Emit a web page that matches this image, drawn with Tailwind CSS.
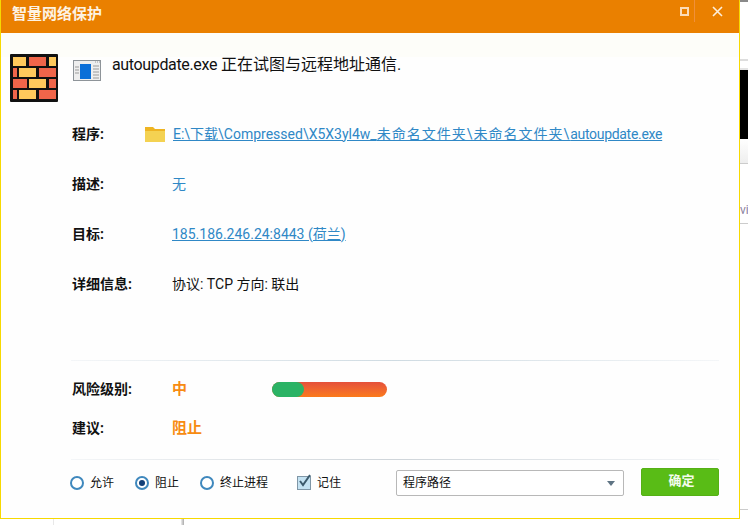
<!DOCTYPE html>
<html lang="zh">
<head>
    <meta charset="UTF-8">
    <title>智量网络保护</title>
    <script src="https://cdn.jsdelivr.net/npm/@tailwindcss/browser@4"></script>
</head>
<body class="relative w-[748px] h-[525px] overflow-hidden bg-white font-['Roboto','Noto_Sans_CJK_SC',sans-serif] text-[14px] text-[#111]">
    <!-- 背景里露出来的窗口 -->
    <div class="absolute left-[740px] top-0 w-2 h-[525px] bg-white">
        <div class="h-[2px] bg-[#8a8a8a]"></div>
        <div class="mt-[57px] h-[2px] bg-[#dddddd]"></div>
        <div class="mt-[7px] h-[2px] bg-[#e4e4e4]"></div>
        <div class="h-[69px] bg-black"></div>
        <div class="h-[25px] bg-gradient-to-b from-[#ffffff] to-[#eeeeee] border-b border-[#cccccc]"></div>
        <div class="mt-[38px] text-[12px] leading-4 text-[#8a7fa0]">vi</div>
        <div class="mt-[5px] h-px bg-[#cccccc]"></div>
        <div class="mt-[285px] h-px bg-[#cccccc]"></div>
    </div>
    <div class="absolute left-[53px] top-[519px] w-px h-[6px] bg-[#e8e8e8]"></div>
    <div class="absolute left-[181px] top-[519px] w-[3px] h-[6px] bg-gradient-to-r from-[#eeeeee] to-[#aaaaaa]"></div>

    <!-- 弹窗 -->
    <div class="absolute left-0 top-0 w-[740px] h-[519px] flex flex-col bg-[#fefefe] border-x border-b border-[#f7d900]">
        <header class="flex justify-between h-[33px] bg-[#ea8000] pl-[11px]">
            <h1 class="text-[15px] font-bold text-[#fdf3e4] leading-[28px]">智量网络保护</h1>
            <div class="flex h-[22px]">
                <button class="flex items-center justify-center w-[21px] border-r border-[#f0903a]">
                    <span class="block w-[9px] h-[9px] border-2 border-[#fbdcb8]"></span>
                </button>
                <button class="flex items-center justify-center w-[44px]">
                    <svg width="11" height="11" viewBox="0 0 11 11" fill="none" stroke="#fdeeda" stroke-width="1.6"><path d="M1 1l9 9M10 1l-9 9"/></svg>
                </button>
            </div>
        </header>

        <!-- 顶部说明 -->
        <div class="h-[24px] bg-[#fdfdf9]"></div>
        <div class="flex items-start pl-[9px] h-[67px] -mt-[24px]">
            <svg class="mt-[21px]" width="48" height="48" viewBox="0 0 48 48">
                <rect width="48" height="48" rx="1" fill="#111"/>
                <rect x="3" y="3" width="13" height="9" fill="#ffc95c"/>
                <rect x="19" y="3" width="17" height="9" fill="#f0654a"/>
                <rect x="39" y="3" width="7" height="9" fill="#ffc95c"/>
                <rect x="3" y="14" width="4" height="9" fill="#f0654a"/>
                <rect x="9" y="14" width="17" height="9" fill="#ffc95c"/>
                <rect x="29" y="14" width="17" height="9" fill="#f0654a"/>
                <rect x="3" y="25" width="14" height="9" fill="#f0654a"/>
                <rect x="19" y="25" width="17" height="9" fill="#ffc95c"/>
                <rect x="39" y="25" width="7" height="9" fill="#f0654a"/>
                <rect x="3" y="36" width="4" height="9" fill="#f0654a"/>
                <rect x="9" y="36" width="17" height="9" fill="#ffc95c"/>
                <rect x="29" y="36" width="17" height="9" fill="#f0654a"/>
            </svg>
            <svg class="mt-[27px] ml-[15px]" width="28" height="21" viewBox="0 0 28 21">
                <rect x="0.5" y="0.5" width="27" height="20" fill="#eeeeee" stroke="#8e9499"/>
                <rect x="7" y="4" width="11" height="15" fill="#0a6fd8"/>
                <path d="M2 7h4M2 10h4M2 13h4M20 6h6M20 9h6M20 12h6M20 15h6M20 18h6" stroke="#9a9a9a"/>
                <path d="M22 2h1M24 2h1M26 2h1" stroke="#9a9a9a"/>
            </svg>
            <p class="mt-[22px] ml-[11px] text-[16px] leading-[20px]"><span class="tracking-[-0.35px]">autoupdate.exe</span> 正在试图与远程地址通信.</p>
        </div>

        <!-- 详情 -->
        <dl class="pl-[71px] mt-[24px] flex flex-col">
            <div class="flex items-center h-[20px]">
                <dt class="w-[100px] font-bold">程序:</dt>
                <dd class="flex items-center -ml-[27px]">
                    <svg width="20" height="16" viewBox="0 0 20 16">
                        <path d="M0 1h8l2 2h10v3H0z" fill="#eeb422"/>
                        <rect y="5" width="20" height="11" fill="#f4d252"/>
                    </svg>
                    <a class="ml-[8px] text-[#2f88c6] underline">E:\下载\Compressed\X5X3yl4w_<span class="tracking-[1px]">未命名文件夹\未命名文件夹\</span><span class="tracking-[-0.3px]">autoupdate.exe</span></a>
                </dd>
            </div>
            <div class="flex items-center h-[20px] mt-[30px]">
                <dt class="w-[100px] font-bold">描述:</dt>
                <dd class="text-[#2f88c6]">无</dd>
            </div>
            <div class="flex items-center h-[20px] mt-[30px]">
                <dt class="w-[100px] font-bold">目标:</dt>
                <dd><a class="text-[#2f88c6] underline">185.186.246.24:8443 (荷兰)</a></dd>
            </div>
            <div class="flex items-center h-[20px] mt-[30px]">
                <dt class="w-[100px] font-bold">详细信息:</dt>
                <dd>协议: TCP 方向: 联出</dd>
            </div>
        </dl>

        <!-- 风险 -->
        <div class="ml-[70px] mr-[20px] mt-[66px] h-px bg-gradient-to-r from-[#f4f6f8] via-[#cfdbe2] to-[#f4f6f8]"></div>
        <div class="pl-[71px] mt-[18px] flex items-center h-[20px]">
            <span class="w-[100px] font-bold">风险级别:</span>
            <span class="w-[100px] text-[15px] font-bold text-[#f78b12]">中</span>
            <div class="w-[115px] h-[15px] rounded-full bg-gradient-to-b from-[#e5503a] to-[#fb7a18]">
                <div class="w-[32px] h-[15px] rounded-full bg-[#2bb365]"></div>
            </div>
        </div>
        <div class="pl-[71px] mt-[19px] flex items-center h-[20px]">
            <span class="w-[100px] font-bold">建议:</span>
            <span class="text-[15px] font-bold text-[#f78b12]">阻止</span>
        </div>

        <!-- 底部操作 -->
        <div class="ml-[70px] mr-[20px] mt-[21px] h-px bg-gradient-to-r from-[#f4f6f8] via-[#cfd5da] to-[#f4f6f8]"></div>
        <div class="flex items-center pl-[69px] mt-[8px] h-[28px] text-[12px]">
            <label class="flex items-center w-[65px] mt-[2px]">
                <span class="w-[14px] h-[14px] rounded-full border-2 border-[#3f88bd] bg-white"></span>
                <span class="ml-[6px]">允许</span>
            </label>
            <label class="flex items-center w-[65px] mt-[2px]">
                <span class="flex items-center justify-center w-[14px] h-[14px] rounded-full border-2 border-[#3f88bd] bg-white">
                    <span class="w-[6px] h-[6px] rounded-full bg-[#123f78]"></span>
                </span>
                <span class="ml-[6px]">阻止</span>
            </label>
            <label class="flex items-center w-[97px] mt-[2px]">
                <span class="w-[14px] h-[14px] rounded-full border-2 border-[#3f88bd] bg-white"></span>
                <span class="ml-[6px]">终止进程</span>
            </label>
            <label class="flex items-center w-[99px] mt-[2px]">
                <span class="relative w-[14px] h-[14px] border border-[#7f96a6] bg-[#c4e2f2]">
                    <svg class="absolute -top-[4px] left-0" width="15" height="15" viewBox="0 0 15 15" fill="none" stroke="#3c5a6c" stroke-width="2"><path d="M2 8l3 4 7-10"/></svg>
                </span>
                <span class="ml-[6px]">记住</span>
            </label>
            <div class="flex items-center justify-between w-[228px] h-[26px] mt-[2px] pl-[6px] pr-[8px] bg-white border border-[#b8b8b8] rounded-[2px]">
                <span>程序路径</span>
                <span class="w-0 h-0 border-x-[4px] border-x-transparent border-t-[5px] border-t-[#5f7484]"></span>
            </div>
            <button class="ml-[17px] w-[78px] h-[28px] pb-[3px] pl-[3px] bg-[#59bc16] border border-[#55b015] rounded-[2px] text-[13px] font-bold text-[#f4fbee]">确定</button>
        </div>
    </div>
</body>
</html>
